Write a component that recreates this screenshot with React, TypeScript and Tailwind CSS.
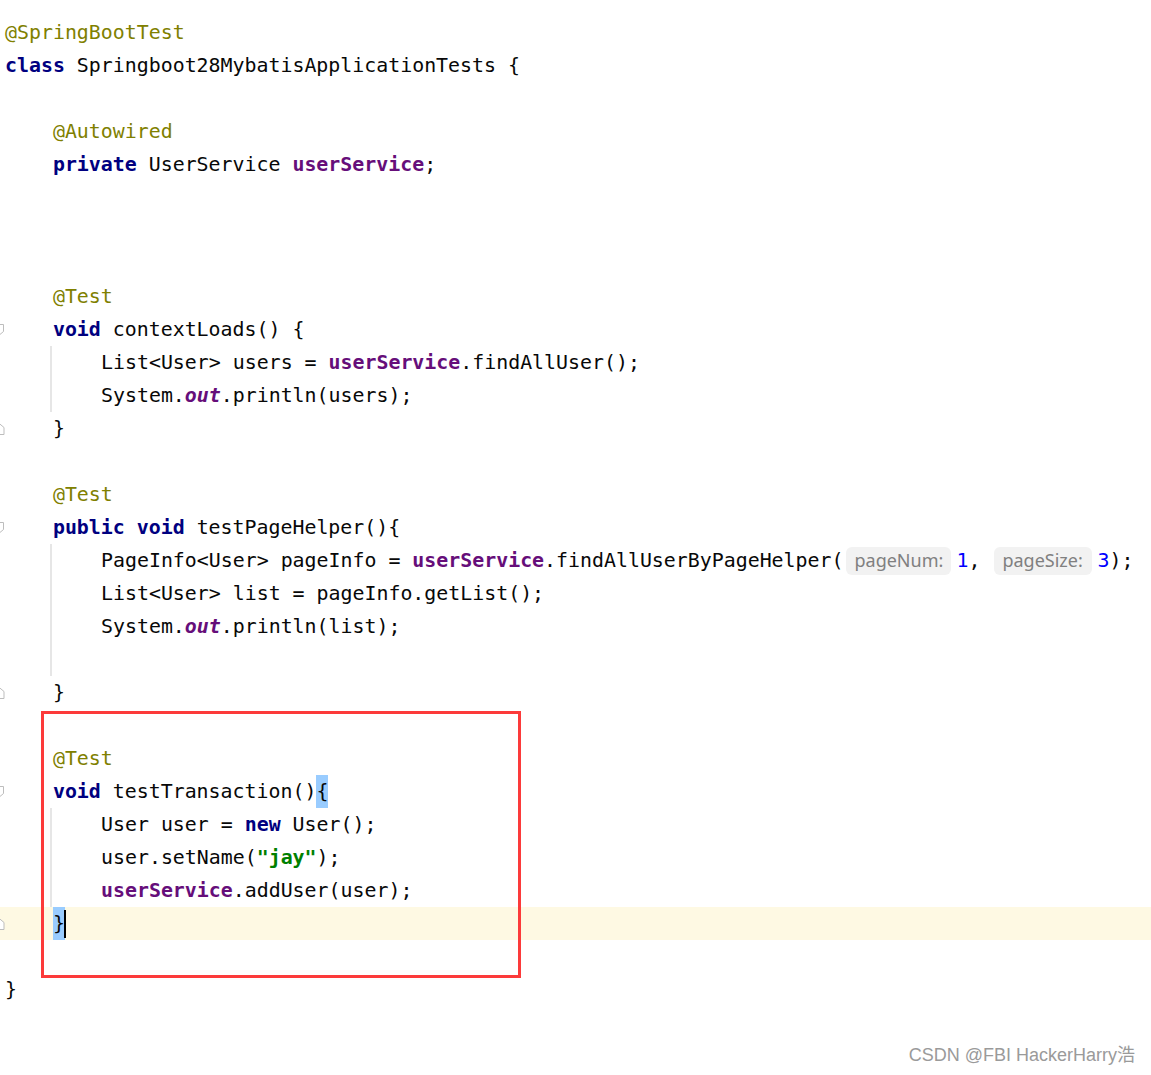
import React from "react";

type Tok = [string, string?];

const KW = "font-bold text-[#000080]";
const ANN = "text-[#808000]";
const FLD = "font-bold text-[#660e7a]";
const STAT = "font-bold italic text-[#660e7a]";
const STR = "font-bold text-[#008000]";
const NUM = "text-[#0000ff]";

const Fold = ({ close }: { close?: boolean }) => (
  <svg
    width="12"
    height="14"
    viewBox="0 0 12 14"
    className={"-ml-[7px] shrink-0 " + (close ? "rotate-180" : "")}
  >
    <path
      d="M1 1.5 H10.5 V8.5 L5.75 12.5 L1 8.5 Z"
      fill="white"
      stroke="#bdbdbd"
      strokeWidth="1"
    />
  </svg>
);

const Row = ({
  toks = [],
  fold,
  indent = 0,
  current,
  children,
}: {
  toks?: Tok[];
  fold?: "open" | "close";
  indent?: number;
  current?: boolean;
  children?: React.ReactNode;
}) => (
  <div className={"flex h-[33px] items-center " + (current ? "bg-[#fef9e3]" : "")}>
    <div className="flex h-full w-[5px] shrink-0 items-center overflow-hidden">
      {fold && <Fold close={fold === "close"} />}
    </div>
    <div className="flex h-full items-center whitespace-pre">
      {indent > 0 && <span>{" ".repeat(indent)}</span>}
      {toks.map(([t, c], i) => (
        <span key={i} className={c}>
          {t}
        </span>
      ))}
      {children}
    </div>
  </div>
);

const Body = ({ children }: { children: React.ReactNode }) => (
  <div className="ml-[50px] border-l-2 border-[#e6e6e6] pl-[44px]">{children}</div>
);

const Hint = ({ label, w }: { label: string; w: string }) => (
  <span
    className={
      "inline-flex h-[28px] items-center rounded-[6px] bg-[#f2f2f2] px-[8px] font-['Noto_Sans',sans-serif] text-[18px] text-[#808080] " +
      w
    }
  >
    {label}
  </span>
);

export default function App() {
  return (
    <div className="relative h-[1075px] w-[1151px] overflow-hidden bg-white font-['DejaVu_Sans_Mono',monospace] text-[19.9px] text-[#080808]">
      <div className="pt-[16px]">
        <Row toks={[["@SpringBootTest", ANN]]} />
        <Row toks={[["class", KW], [" Springboot28MybatisApplicationTests {"]]} />
        <Row />
        <Row indent={4} toks={[["@Autowired", ANN]]} />
        <Row indent={4} toks={[["private", KW], [" UserService "], ["userService", FLD], [";"]]} />
        <Row />
        <Row />
        <Row />
        <Row indent={4} toks={[["@Test", ANN]]} />
        <Row indent={4} fold="open" toks={[["void", KW], [" contextLoads() {"]]} />
        <Body>
          <Row toks={[["List<User> users = "], ["userService", FLD], [".findAllUser();"]]} />
          <Row toks={[["System."], ["out", STAT], [".println(users);"]]} />
        </Body>
        <Row indent={4} fold="close" toks={[["}"]]} />
        <Row />
        <Row indent={4} toks={[["@Test", ANN]]} />
        <Row
          indent={4}
          fold="open"
          toks={[["public", KW], [" "], ["void", KW], [" testPageHelper(){"]]}
        />
        <Body>
          <Row toks={[["PageInfo<User> pageInfo = "], ["userService", FLD], [".findAllUserByPageHelper("]]}>
            <span className="ml-[3px] mr-[5px] flex items-center">
              <Hint label="pageNum:" w="w-[105px]" />
            </span>
            <span className={NUM}>1</span>
            <span>, </span>
            <span className="ml-[2px] mr-[5px] flex items-center">
              <Hint label="pageSize:" w="w-[98px]" />
            </span>
            <span className={NUM}>3</span>
            <span>);</span>
          </Row>
          <Row toks={[["List<User> list = pageInfo.getList();"]]} />
          <Row toks={[["System."], ["out", STAT], [".println(list);"]]} />
          <Row />
        </Body>
        <Row indent={4} fold="close" toks={[["}"]]} />
        <Row />
        <Row indent={4} toks={[["@Test", ANN]]} />
        <Row indent={4} fold="open" toks={[["void", KW], [" testTransaction()"]]}>
          <span className="flex h-full items-center bg-[#99ccff]">{"{"}</span>
        </Row>
        <Body>
          <Row toks={[["User user = "], ["new", KW], [" User();"]]} />
          <Row toks={[["user.setName("], ['"jay"', STR], [");"]]} />
          <Row toks={[["userService", FLD], [".addUser(user);"]]} />
        </Body>
        <Row indent={4} fold="close" current>
          <span className="flex h-full items-center bg-[#99ccff]">{"}"}</span>
          <span className="-ml-[1px] h-[28px] w-[2px] bg-black" />
        </Row>
        <Row />
        <Row toks={[["}"]]} />
      </div>

      <div className="absolute left-[41px] top-[711px] h-[267px] w-[480px] border-[3px] border-[#fc3a3a]" />

      <div className="absolute bottom-[6px] right-[16px] font-['Liberation_Sans','Noto_Sans_CJK_SC',sans-serif] text-[18px] text-[#9a9a9a]">
        CSDN @FBI HackerHarry浩
      </div>
    </div>
  );
}
